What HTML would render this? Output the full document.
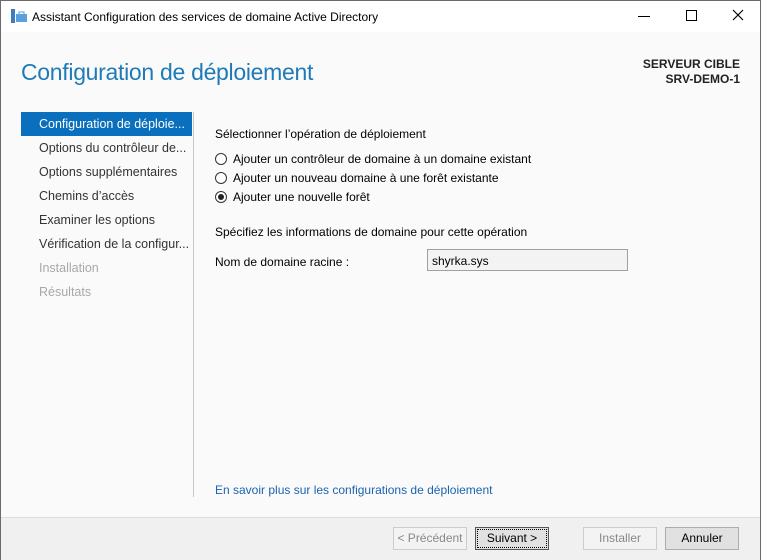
<!DOCTYPE html><html><head><style>
*{margin:0;padding:0;box-sizing:border-box}
body{width:761px;height:560px;overflow:hidden;font-family:"Liberation Sans",sans-serif;font-size:12px;color:#000;background:#fafafa;position:relative;border:1px solid #6a6a6a}
.a{position:absolute;white-space:nowrap}
.nav{color:#333;font-size:12.5px}
.dis{color:#a8a8a8}
.btn{position:absolute;top:526px;height:23px;border:1px solid #adadad;background:#e1e1e1;text-align:center;line-height:21px;font-size:12px}
.r{position:absolute;width:12px;height:12px;border:1px solid #333;border-radius:50%;background:#fff}
</style></head><body>
<div class="a" style="left:0;top:0;width:759px;height:31px;background:#fff"></div>
<svg class="a" style="left:9px;top:7px" width="18" height="16"><rect x="1" y="1" width="4" height="14" fill="#3a7fc4"/><rect x="6" y="6" width="11" height="8" fill="#5aa0dc"/><rect x="9" y="4" width="5" height="3" fill="none" stroke="#5aa0dc"/></svg>
<div class="a" style="left:31px;top:9px;font-size:12px">Assistant Configuration des services de domaine Active Directory</div>
<div class="a" style="left:637px;top:15px;width:12px;height:1px;background:#000"></div>
<div class="a" style="left:685px;top:9px;width:11px;height:11px;border:1px solid #000"></div>
<svg class="a" style="left:731px;top:8px" width="12" height="12"><path d="M1 1L11 11M11 1L1 11" stroke="#000" stroke-width="1.2"/></svg>
<div class="a" style="left:20px;top:58px;font-size:23px;color:#1e7bb8;font-weight:300;letter-spacing:-0.3px">Configuration de déploiement</div>
<div class="a" style="right:20px;top:56px;font-weight:bold;text-align:right;line-height:15px;color:#222">SERVEUR CIBLE<br>SRV-DEMO-1</div>
<div class="a" style="left:20px;top:111px;width:171px;height:24px;background:#0a6fbd"></div>
<div class="a" style="left:192px;top:111px;width:1px;height:385px;background:#c8c8c8"></div>
<div class="a nav" style="left:38px;top:116px;color:#fff">Configuration de déploie...</div>
<div class="a nav" style="left:38px;top:140px">Options du contrôleur de...</div>
<div class="a nav" style="left:38px;top:164px">Options supplémentaires</div>
<div class="a nav" style="left:38px;top:188px">Chemins d’accès</div>
<div class="a nav" style="left:38px;top:212px">Examiner les options</div>
<div class="a nav" style="left:38px;top:236px">Vérification de la configur...</div>
<div class="a nav dis" style="left:38px;top:260px">Installation</div>
<div class="a nav dis" style="left:38px;top:284px">Résultats</div>
<div class="a" style="left:214px;top:126px">Sélectionner l’opération de déploiement</div>
<div class="r" style="left:214px;top:152px"></div><div class="a" style="left:232px;top:151px">Ajouter un contrôleur de domaine à un domaine existant</div>
<div class="r" style="left:214px;top:171px"></div><div class="a" style="left:232px;top:170px">Ajouter un nouveau domaine à une forêt existante</div>
<div class="r" style="left:214px;top:190px"></div><div class="a" style="left:217px;top:193px;width:6px;height:6px;border-radius:50%;background:#222"></div><div class="a" style="left:232px;top:189px">Ajouter une nouvelle forêt</div>
<div class="a" style="left:214px;top:224px">Spécifiez les informations de domaine pour cette opération</div>
<div class="a" style="left:214px;top:254px">Nom de domaine racine :</div>
<div class="a" style="left:426px;top:248px;width:201px;height:22px;border:1px solid #a0a0a0;background:#f3f3f3;padding:4px 4px;">shyrka.sys</div>
<div class="a" style="left:214px;top:482px;color:#1a64b0">En savoir plus sur les configurations de déploiement</div>
<div class="a" style="left:0;top:516px;width:759px;height:43px;background:#f0f0f0;border-top:1px solid #dcdcdc"></div>
<div class="btn" style="left:392px;width:74px;color:#888;background:#f3f3f3;border-color:#ccc">&lt; Précédent</div>
<div class="btn" style="left:474px;width:74px;border:1px solid #555;outline:1px dotted #000;outline-offset:-3px">Suivant &gt;</div>
<div class="btn" style="left:582px;width:74px;color:#888;background:#f3f3f3;border-color:#ccc">Installer</div>
<div class="btn" style="left:664px;width:74px">Annuler</div>
</body></html>
